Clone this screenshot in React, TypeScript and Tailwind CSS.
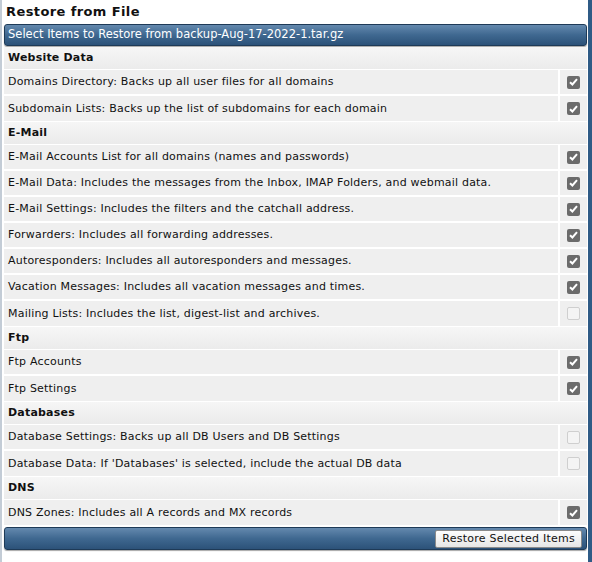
type Item = { label: string; checked: boolean };
type Section = { title: string; items: Item[] };

const sections: Section[] = [
  {
    title: "Website Data",
    items: [
      { label: "Domains Directory: Backs up all user files for all domains", checked: true },
      { label: "Subdomain Lists: Backs up the list of subdomains for each domain", checked: true },
    ],
  },
  {
    title: "E-Mail",
    items: [
      { label: "E-Mail Accounts List for all domains (names and passwords)", checked: true },
      { label: "E-Mail Data: Includes the messages from the Inbox, IMAP Folders, and webmail data.", checked: true },
      { label: "E-Mail Settings: Includes the filters and the catchall address.", checked: true },
      { label: "Forwarders: Includes all forwarding addresses.", checked: true },
      { label: "Autoresponders: Includes all autoresponders and messages.", checked: true },
      { label: "Vacation Messages: Includes all vacation messages and times.", checked: true },
      { label: "Mailing Lists: Includes the list, digest-list and archives.", checked: false },
    ],
  },
  {
    title: "Ftp",
    items: [
      { label: "Ftp Accounts", checked: true },
      { label: "Ftp Settings", checked: true },
    ],
  },
  {
    title: "Databases",
    items: [
      { label: "Database Settings: Backs up all DB Users and DB Settings", checked: false },
      { label: "Database Data: If 'Databases' is selected, include the actual DB data", checked: false },
    ],
  },
  {
    title: "DNS",
    items: [{ label: "DNS Zones: Includes all A records and MX records", checked: true }],
  },
];

const CheckBox = ({ checked }: { checked: boolean }) =>
  checked ? (
    <span className="flex h-[13px] w-[13px] items-center justify-center rounded-[2px] bg-[#6b6b6b]">
      <svg width="9" height="8" viewBox="0 0 9 8">
        <path d="M1 4.2 L3.4 6.5 L8 1.2" stroke="#fff" strokeWidth="2" fill="none" />
      </svg>
    </span>
  ) : (
    <span className="block h-[13px] w-[13px] rounded-[2px] border border-[#cfcfcf] bg-[#f4f4f4]" />
  );

const barClass =
  "rounded-[3px] border border-[#1e3a57] bg-gradient-to-b from-[#6489ae] via-[#3f6890] to-[#2c5279] shadow-[0_1px_1px_rgba(0,0,0,0.35)]";

export default function App() {
  return (
    <div className="h-[562px] w-[592px] border-r-4 border-l-2 border-r-[#2f5b86] border-l-[#c3ccd6] bg-white font-['DejaVu_Sans',sans-serif] text-[11px] tracking-[0.2px] text-[#111]">
      <div className="pl-[2px] pr-[1px]">
        <div className="h-[24px] pl-[2px] pt-[4px] text-[13px] font-bold leading-[16px] tracking-[0.4px]">
          Restore from File
        </div>
        <div className={`${barClass} flex h-[22px] items-center px-[3px] text-[11.5px] tracking-normal text-white`}>
          Select Items to Restore from backup-Aug-17-2022-1.tar.gz
        </div>
        <div className="flex flex-col pt-[1px]">
          {sections.map((s) => (
            <div key={s.title} className="flex flex-col">
              <div className="flex h-[23px] items-center border-b border-white bg-gradient-to-b from-[#f6f6f6] to-[#ebebeb] pl-[4px] text-[11px] font-bold">
                {s.title}
              </div>
              {s.items.map((it, i) => (
                <div
                  key={it.label}
                  className={`flex h-[26px] bg-[#efefef] ${i === s.items.length - 1 ? "border-b border-white" : "border-b-2 border-white"}`}
                >
                  <div className="flex flex-1 items-center border-r-2 border-white pl-[4px] pt-[1px]">{it.label}</div>
                  <div className="flex w-[27px] items-center justify-center">
                    <CheckBox checked={it.checked} />
                  </div>
                </div>
              ))}
            </div>
          ))}
        </div>
        <div className={`${barClass} mt-[1px] flex h-[23px] items-center justify-end pr-[4px]`}>
          <button className="h-[18px] rounded-[2px] border border-[#8a8a8a] bg-gradient-to-b from-[#fdfdfd] to-[#e6e6e6] px-[6px] text-[11px] leading-[16px] tracking-[0.25px] text-[#111]">
            Restore Selected Items
          </button>
        </div>
      </div>
    </div>
  );
}
